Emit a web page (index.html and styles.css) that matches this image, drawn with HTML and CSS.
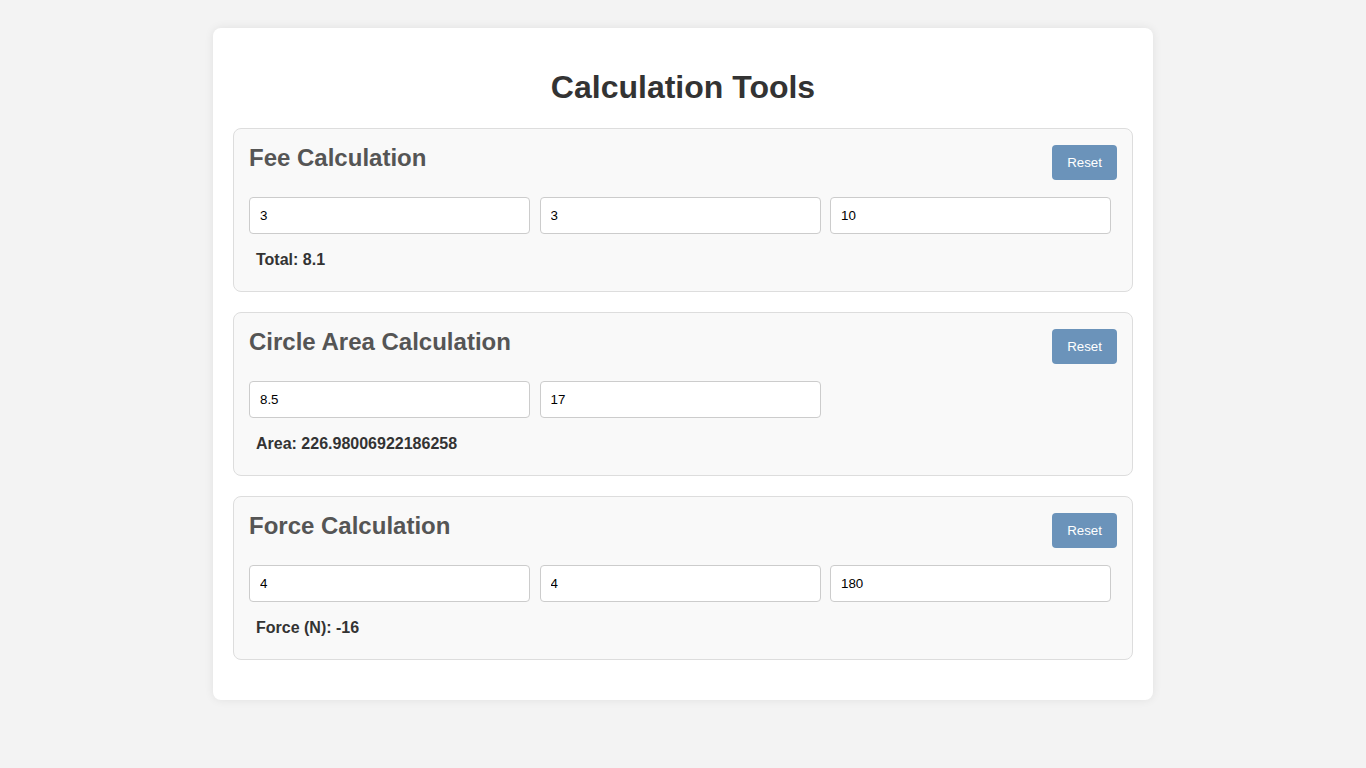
FILE: index.html
```html
<!DOCTYPE html>
<html lang="en">
<head>
<meta charset="utf-8">
<title>Calculation Tools</title>
<link rel="stylesheet" href="styles.css">
</head>
<body>
<div class="container">
  <h1 class="title">Calculation Tools</h1>

  <section class="calc">
    <div class="calc-head">
      <h2 class="calc-title">Fee Calculation</h2>
      <button class="reset" type="button">Reset</button>
    </div>
    <div class="fields">
      <input class="field" type="text" value="3">
      <input class="field" type="text" value="3">
      <input class="field" type="text" value="10">
    </div>
    <div class="result">Total: 8.1</div>
  </section>

  <section class="calc">
    <div class="calc-head">
      <h2 class="calc-title">Circle Area Calculation</h2>
      <button class="reset" type="button">Reset</button>
    </div>
    <div class="fields">
      <input class="field" type="text" value="8.5">
      <input class="field" type="text" value="17">
    </div>
    <div class="result">Area: 226.98006922186258</div>
  </section>

  <section class="calc">
    <div class="calc-head">
      <h2 class="calc-title">Force Calculation</h2>
      <button class="reset" type="button">Reset</button>
    </div>
    <div class="fields">
      <input class="field" type="text" value="4">
      <input class="field" type="text" value="4">
      <input class="field" type="text" value="180">
    </div>
    <div class="result">Force (N): -16</div>
  </section>
</div>
</body>
</html>
```

FILE: styles.css
```css
html, body {
  margin: 0;
  padding: 0;
}
body {
  background: #f3f3f3;
  font-family: "Liberation Sans", Arial, sans-serif;
  color: #333;
  padding: 28px 0;
}
.container {
  width: 900px;
  margin: 0 auto;
  padding: 20px;
  background: #fff;
  border-radius: 8px;
  box-shadow: 0 0 10px rgba(0, 0, 0, 0.08);
}
.title {
  font-size: 32px;
  font-weight: bold;
  text-align: center;
  color: #333;
  margin: 21px 0 22px;
}
.calc {
  background: #f9f9f9;
  border: 1px solid #ddd;
  border-radius: 8px;
  padding: 15px;
  margin-bottom: 20px;
}
.calc-head {
  display: flex;
  justify-content: space-between;
  align-items: flex-start;
  margin-bottom: 17px;
}
.calc-title {
  margin: 0;
  font-size: 24px;
  font-weight: bold;
  color: #555;
}
.reset {
  margin-top: 1px;
  background: #6b93ba;
  color: #fff;
  border: none;
  border-radius: 4px;
  padding: 10px 15px;
  font-family: "Liberation Sans", Arial, sans-serif;
  font-size: 13.333px;
  line-height: 15px;
  cursor: pointer;
}
.fields {
  display: flex;
  gap: 9.5px;
}
.field {
  box-sizing: border-box;
  width: 281px;
  height: 37px;
  padding: 10px;
  border: 1px solid #ccc;
  border-radius: 4px;
  background: #fff;
  font-family: "Liberation Sans", Arial, sans-serif;
  font-size: 13.333px;
  color: #000;
}
.result {
  margin-top: 9px;
  padding: 8px 8px 7px 7px;
  font-size: 16px;
  font-weight: bold;
  color: #333;
}
```
